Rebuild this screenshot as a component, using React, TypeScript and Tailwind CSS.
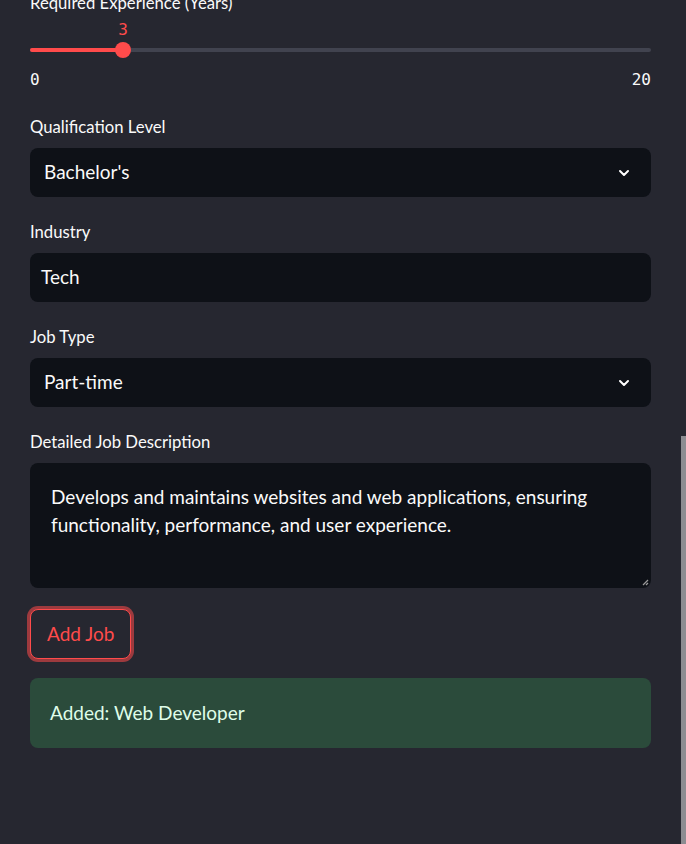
import { ChevronDown } from "lucide-react";

const sans = "font-['Lato','Noto_Sans',sans-serif]";
const mono = "font-['DejaVu_Sans_Mono','Liberation_Mono',monospace]";

function Label({ text }: { text: string }) {
    return (
        <div className={`h-6 pt-[2px] flex items-center text-[16.7px] text-[#fafafa] ${sans}`}>{text}</div>
    );
}

function SelectBox({ value }: { value: string }) {
    return (
        <div className="mt-[9px] h-[49px] rounded-lg bg-[#0e1117] flex items-center justify-between pl-[14px] pr-[19px]">
            <span className={`text-[19px] text-[#fafafa] ${sans}`}>{value}</span>
            <ChevronDown className="w-[16px] h-[16px] text-white" strokeWidth={3} />
        </div>
    );
}

export default function App() {
    const value = 3;
    const max = 20;
    const pct = (value / max) * 100;

    return (
        <div className={`relative w-[686px] h-[844px] overflow-hidden bg-[#262730] ${sans}`}>
            <div className="pl-[30px] pr-[35px] -mt-[9px] flex flex-col">
                {/* slider */}
                <Label text="Required Experience (Years)" />
                <div className="relative h-[52px]">
                    <div
                        className={`absolute top-[3px] -translate-x-1/2 text-[16px] text-[#ff4b4b] ${mono}`}
                        style={{ left: `${pct}%` }}
                    >
                        {value}
                    </div>
                    <div className="absolute left-0 right-0 top-[33px] h-[4px] rounded-full bg-[#41434f]" />
                    <div className="absolute left-0 top-[33px] h-[4px] rounded-full bg-[#ff4b4b]" style={{ width: `${pct}%` }} />
                    <div
                        className="absolute top-[27px] w-[16px] h-[16px] -translate-x-1/2 rounded-full bg-[#ff4b4b]"
                        style={{ left: `${pct}%` }}
                    />
                </div>
                <div className={`flex justify-between pt-[1px] text-[16px] leading-6 text-[#fafafa] ${mono}`}>
                    <span>0</span>
                    <span>{max}</span>
                </div>

                <div className="mt-[23px]">
                    <Label text="Qualification Level" />
                    <SelectBox value="Bachelor's" />
                </div>

                <div className="mt-[23px]">
                    <Label text="Industry" />
                    <div className="mt-[9px] h-[49px] rounded-lg bg-[#0e1117] flex items-center px-[11px]">
                        <span className="text-[19px] text-[#fafafa]">Tech</span>
                    </div>
                </div>

                <div className="mt-[23px]">
                    <Label text="Job Type" />
                    <SelectBox value="Part-time" />
                </div>

                <div className="mt-[23px]">
                    <Label text="Detailed Job Description" />
                    <div className="relative mt-[9px] h-[125px] rounded-lg bg-[#0e1117] pt-[20px] px-[21px] text-[19px] leading-[28px] text-[#fafafa]">
                        Develops and maintains websites and web applications, ensuring functionality, performance, and user experience.
                        <svg className="absolute right-[2px] bottom-[2px]" width="7" height="7" viewBox="0 0 7 7">
                            <path d="M1 6 L6 1" stroke="#9a9a9a" strokeWidth="1.2" />
                            <path d="M4 6 L6 4" stroke="#9a9a9a" strokeWidth="1.2" />
                        </svg>
                    </div>
                </div>

                <div className="mt-[21px]">
                    <button className="h-[50px] px-[16px] rounded-lg border border-[#ff4b4b] ring-[3px] ring-[#ff4b4b]/55 bg-[#262730] text-[19px] text-[#ff4b4b]">
                        Add Job
                    </button>
                </div>

                <div className="mt-[19px] h-[70px] rounded-lg bg-[#2b4b3b] flex items-center px-[20px] text-[19px] text-[#dffde9]">
                    Added: Web Developer
                </div>
            </div>

            {/* scrollbar thumb */}
            <div className="absolute right-0 top-[436px] bottom-0 w-[5px] bg-[#8c8c91]" />
        </div>
    );
}
